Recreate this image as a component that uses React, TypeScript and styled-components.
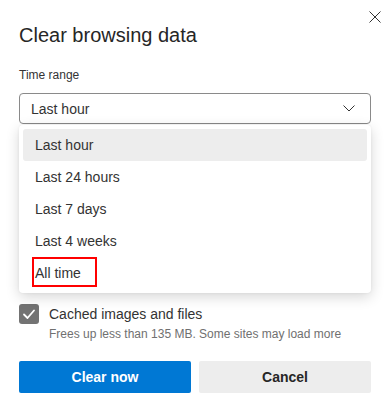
import React from "react";
import styled, { createGlobalStyle } from "styled-components";

const Global = createGlobalStyle`
  html, body { margin: 0; padding: 0; background: #ffffff; }
  body { font-family: "Liberation Sans", Arial, sans-serif; color: #333333; }
  * { box-sizing: border-box; }
`;

const Dialog = styled.div`
  width: 392px;
  height: 413px;
  padding: 0 21px 0 19px;
  display: flex;
  flex-direction: column;
  background: #ffffff;
`;

const Header = styled.div`
  display: flex;
  justify-content: space-between;
  align-items: flex-start;
`;

const Title = styled.h1`
  margin: 21px 0 0 0;
  font-size: 20px;
  line-height: 28px;
  font-weight: 400;
  color: #262626;
`;

const CloseButton = styled.button`
  margin: 11px -10px 0 0;
  padding: 0;
  width: 12px;
  height: 12px;
  border: none;
  background: transparent;
  display: flex;
  cursor: pointer;
`;

const FieldLabel = styled.div`
  margin-top: 18px;
  font-size: 12px;
  line-height: 16px;
  color: #333333;
`;

const SelectWrap = styled.div`
  position: relative;
  margin-top: 10px;
`;

const SelectBox = styled.div`
  height: 31px;
  border: 1px solid #8a8a8a;
  border-radius: 4px;
  display: flex;
  align-items: center;
  justify-content: space-between;
  padding: 0 15px 0 11px;
  font-size: 14px;
  color: #333333;
`;

const Menu = styled.ul`
  position: absolute;
  z-index: 2;
  top: calc(100% + 1px);
  left: 0;
  right: 0;
  margin: 0;
  padding: 4px;
  list-style: none;
  background: #ffffff;
  border-radius: 4px;
  box-shadow: 0 4px 14px rgba(0, 0, 0, 0.16), 0 0 3px rgba(0, 0, 0, 0.06);
`;

const MenuItem = styled.li<{ $active?: boolean }>`
  position: relative;
  height: 32px;
  display: flex;
  align-items: center;
  padding-left: 12px;
  border-radius: 3px;
  font-size: 14px;
  color: #333333;
  background: ${(p) => (p.$active ? "#ededed" : "transparent")};
`;

const Highlight = styled.span`
  position: absolute;
  left: 9px;
  top: 0;
  width: 65px;
  height: 30px;
  border: 2px solid #ff0000;
`;

const CheckList = styled.div`
  display: flex;
  flex-direction: column;
  gap: 18px;
  margin-top: 180px;
`;

const CheckItem = styled.label`
  display: grid;
  grid-template-columns: 20px 1fr;
  column-gap: 10px;
  align-items: start;
  height: 38px;
`;

const Box = styled.span`
  width: 20px;
  height: 20px;
  border-radius: 3px;
  background: #737373;
  display: flex;
  align-items: center;
  justify-content: center;
`;

const ItemText = styled.div`
  display: flex;
  flex-direction: column;
  gap: 2px;
  min-width: 0;
`;

const ItemTitle = styled.span`
  font-size: 14px;
  line-height: 20px;
  color: #333333;
  white-space: nowrap;
`;

const ItemDesc = styled.span`
  font-size: 12px;
  line-height: 16px;
  color: #707070;
  white-space: nowrap;
  overflow: hidden;
`;

const Buttons = styled.div`
  display: grid;
  grid-template-columns: 1fr 1fr;
  column-gap: 8px;
  margin-top: 19px;
`;

const Button = styled.button<{ $primary?: boolean }>`
  height: 32px;
  border: none;
  border-radius: 2px;
  font-family: inherit;
  font-size: 14px;
  font-weight: 700;
  background: ${(p) => (p.$primary ? "#0078d4" : "#ededed")};
  color: ${(p) => (p.$primary ? "#ffffff" : "#262626")};
  cursor: pointer;
`;

const Check = () => (
  <svg width="14" height="14" viewBox="0 0 14 14">
    <path d="M2 7.5 L5.5 11 L12 3.5" fill="none" stroke="#ffffff" strokeWidth="1.8" strokeLinecap="round" strokeLinejoin="round" />
  </svg>
);

const options = ["Last hour", "Last 24 hours", "Last 7 days", "Last 4 weeks", "All time"];

const items = [
  { title: "Cached images and files", desc: "Frees up less than 135 MB. Some sites may load more" },
];

export default function App() {
  return (
    <>
      <Global />
      <Dialog>
        <Header>
          <Title>Clear browsing data</Title>
          <CloseButton aria-label="Close">
            <svg width="12" height="12" viewBox="0 0 12 12">
              <path d="M0.5 0.5 L11.5 11.5 M11.5 0.5 L0.5 11.5" stroke="#333333" strokeWidth="1" fill="none" />
            </svg>
          </CloseButton>
        </Header>
        <FieldLabel>Time range</FieldLabel>
        <SelectWrap>
          <SelectBox>
            <span>Last hour</span>
            <svg width="12" height="7" viewBox="0 0 12 7">
              <path d="M0.5 0.5 L6 6 L11.5 0.5" stroke="#333333" strokeWidth="1" fill="none" />
            </svg>
          </SelectBox>
          <Menu>
            {options.map((o, i) => (
              <MenuItem key={o} $active={i === 0}>
                {o}
                {i === options.length - 1 && <Highlight />}
              </MenuItem>
            ))}
          </Menu>
        </SelectWrap>
        <CheckList>
          {items.map((it) => (
            <CheckItem key={it.title}>
              <Box>
                <Check />
              </Box>
              <ItemText>
                <ItemTitle>{it.title}</ItemTitle>
                <ItemDesc>{it.desc}</ItemDesc>
              </ItemText>
            </CheckItem>
          ))}
        </CheckList>
        <Buttons>
          <Button $primary>Clear now</Button>
          <Button>Cancel</Button>
        </Buttons>
      </Dialog>
    </>
  );
}
